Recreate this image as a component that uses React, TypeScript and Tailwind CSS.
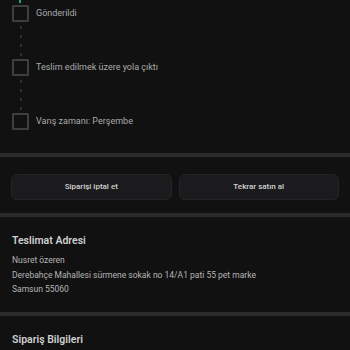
const steps = ['Gönderildi', 'Teslim edilmek üzere yola çıktı', 'Varış zamanı: Perşembe'];

function Connector() {
  return (
    <div className="flex h-[37px] w-[17px] justify-center">
      <svg width="2" height="37" viewBox="0 0 2 37">
        <line x1="1" y1="4" x2="1" y2="37" stroke="#3a3a3a" strokeWidth="1.5" strokeDasharray="3 6" />
      </svg>
    </div>
  );
}

export default function App() {
  return (
    <div
      className="h-[350px] w-[350px] overflow-hidden bg-[#111111]"
      style={{ fontFamily: 'Roboto, "Noto Sans", sans-serif' }}
    >
      {/* tracking steps */}
      <div className="relative h-[153px] px-3 pt-[5px]">
        <div className="absolute left-[19px] top-0 h-[3px] w-[2px] bg-[#2f9c87]" />
        {steps.map((s, i) => (
          <div key={s}>
            <div className="flex items-center gap-[7px]">
              <div className="h-[17px] w-[17px] shrink-0 rounded-[1px] border-2 border-[#3e3e3e]" />
              <span className="text-[9px] leading-none text-[#ababab]">{s}</span>
            </div>
            {i < steps.length - 1 && <Connector />}
          </div>
        ))}
      </div>

      <div className="h-[4px] bg-[#2b2b2b]" />

      {/* actions */}
      <div className="flex gap-[7px] px-[11px] pb-[13px] pt-[17px]">
        <button className="flex h-[26px] flex-1 items-center justify-center rounded-[6px] border border-[#242426] bg-[#1b1b1d] text-[8px] font-medium text-[#d2d2d2]">
          Siparişi iptal et
        </button>
        <button className="flex h-[26px] flex-1 items-center justify-center rounded-[6px] border border-[#242426] bg-[#1b1b1d] text-[8px] font-medium text-[#d2d2d2]">
          Tekrar satın al
        </button>
      </div>

      <div className="h-[4px] bg-[#2b2b2b]" />

      {/* address */}
      <div className="h-[95px] px-3 pt-[17px]">
        <h2 className="text-[10.5px] font-semibold leading-[14px] text-[#cfcfcf]">Teslimat Adresi</h2>
        <div className="mt-[7px] flex flex-col gap-[3px] text-[8.5px] leading-[11.5px] text-[#b5b5b5]">
          <span>Nusret özeren</span>
          <span>Derebahçe Mahallesi sürmene sokak no 14/A1 pati 55 pet marke</span>
          <span>Samsun 55060</span>
        </div>
      </div>

      <div className="h-[4px] bg-[#2b2b2b]" />

      <div className="px-3 pt-[17px]">
        <h2 className="text-[10.5px] font-semibold leading-[14px] text-[#cfcfcf]">Sipariş Bilgileri</h2>
      </div>
    </div>
  );
}
